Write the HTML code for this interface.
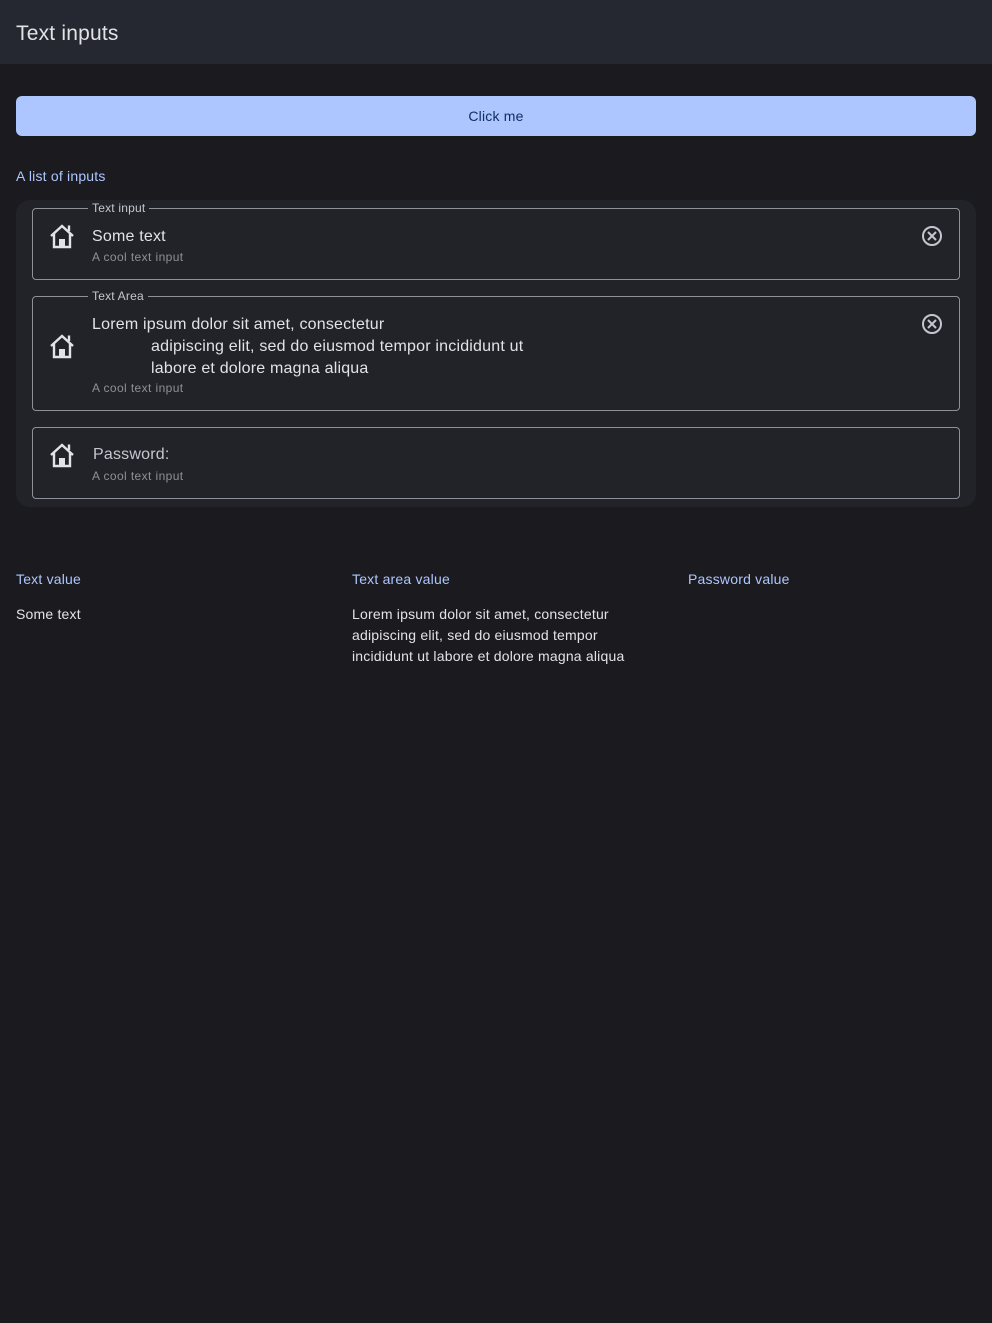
<!DOCTYPE html>
<html><head><meta charset="utf-8"><style>
*{box-sizing:border-box;margin:0;padding:0}
body{width:992px;height:1323px;background:#1b1b1f;font-family:"Liberation Sans",sans-serif;color:#e3e2e6;position:relative;overflow:hidden;letter-spacing:0.2px}
.hdr{position:absolute;left:0;top:0;width:992px;height:64px;background:#262831}
.hdr span{position:absolute;left:16px;top:22px;font-size:21px;color:#e3e2e6}
.btn{position:absolute;left:16px;top:96px;width:960px;height:40px;background:#adc6ff;border-radius:6px;color:#102f60;font-size:14px;text-align:center;line-height:40px}
.lbl{position:absolute;font-size:14px;color:#adc6ff}
.card{position:absolute;left:16px;top:200px;width:960px;height:307px;background:#222328;border-radius:14px}
.f{position:absolute;left:32px;width:928px;border:1px solid #8e9099;border-radius:4px}
.leg{position:absolute;top:-8px;left:55px;background:#222328;padding:0 4px;font-size:12px;color:#c4c6d0}
.ic{position:absolute;left:15px}
.x{position:absolute;right:16px}
.main{position:absolute;left:59px;font-size:16px;color:#e3e2e6}
.sup{position:absolute;left:59px;font-size:12px;color:#8e9099;letter-spacing:0.4px}
.v{position:absolute;font-size:14px;color:#e3e2e6;line-height:21px}
</style></head><body>
<div class="hdr"><span>Text inputs</span></div>
<div class="btn">Click me</div>
<div class="lbl" style="left:16px;top:168px">A list of inputs</div>
<div class="card"></div>
<svg width="0" height="0" style="position:absolute"><defs>
<symbol id="h" viewBox="0 0 28 28"><path d="M3 14 L14 4 L25 14 M6 11.5 V25 H22 V11.5 M21 9 V3.5" fill="none" stroke="#e3e2e6" stroke-width="2.4"/><rect x="11" y="17" width="6" height="8" fill="#e3e2e6"/></symbol>
<symbol id="c" viewBox="0 0 22 22"><circle cx="11" cy="11" r="9" fill="none" stroke="#c4c6d0" stroke-width="2"/><path d="M7 7 L15 15 M15 7 L7 15" stroke="#c4c6d0" stroke-width="2"/></symbol>
</defs></svg>
<div class="f" style="top:208px;height:72px"><div class="leg">Text input</div>
<svg class="ic" style="top:13px" width="28" height="28"><use href="#h"/></svg>
<div class="main" style="top:19px">Some text</div>
<div class="sup" style="top:41px">A cool text input</div>
<svg class="x" style="top:16px" width="22" height="22"><use href="#c"/></svg></div>
<div class="f" style="top:296px;height:115px"><div class="leg">Text Area</div>
<svg class="ic" style="top:35px" width="28" height="28"><use href="#h"/></svg>
<div class="main" style="top:17px;line-height:22px">Lorem ipsum dolor sit amet, consectetur<br><span style="padding-left:59px">adipiscing elit, sed do eiusmod tempor incididunt ut</span><br><span style="padding-left:59px">labore et dolore magna aliqua</span></div>
<div class="sup" style="top:84px">A cool text input</div>
<svg class="x" style="top:16px" width="22" height="22"><use href="#c"/></svg></div>
<div class="f" style="top:427px;height:72px">
<svg class="ic" style="top:13px" width="28" height="28"><use href="#h"/></svg>
<div class="main" style="top:18px;left:60px;color:#c4c6d0">Password:</div>
<div class="sup" style="top:41px">A cool text input</div></div>
<div class="lbl" style="left:16px;top:571px">Text value</div>
<div class="lbl" style="left:352px;top:571px">Text area value</div>
<div class="lbl" style="left:688px;top:571px">Password value</div>
<div class="v" style="left:16px;top:604px">Some text</div>
<div class="v" style="left:352px;top:604px;width:300px">Lorem ipsum dolor sit amet, consectetur<br>adipiscing elit, sed do eiusmod tempor<br>incididunt ut labore et dolore magna aliqua</div>
</body></html>
